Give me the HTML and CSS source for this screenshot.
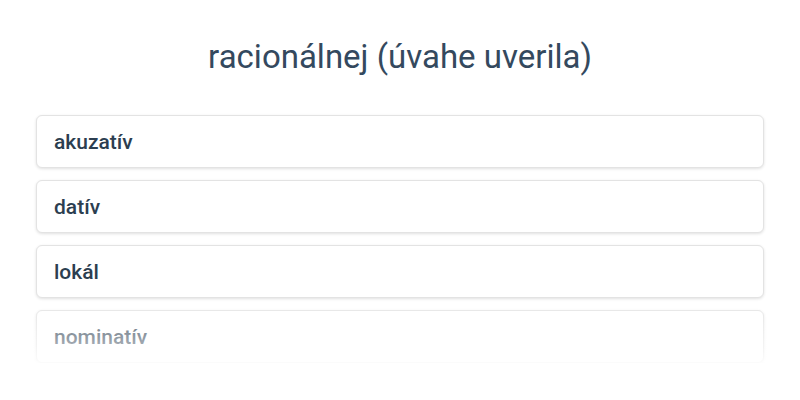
FILE: index.html
```html
<!DOCTYPE html>
<html lang="sk">
<head>
<meta charset="utf-8">
<link rel="stylesheet" href="styles.css">
</head>
<body>
<main class="quiz">
  <h1 class="question">racionálnej (úvahe uverila)</h1>
  <div class="options">
    <button class="option">akuzatív</button>
    <button class="option">datív</button>
    <button class="option">lokál</button>
    <button class="option">nominatív</button>
  </div>
</main>
</body>
</html>
```
FILE: styles.css
```css
html, body {
  margin: 0;
  background: #ffffff;
}
body {
  font-family: Roboto, "Noto Sans", sans-serif;
  color: #2c3e50;
}
.quiz {
  padding: 35px 36px 0;
}
.question {
  margin: 0 0 36px;
  text-align: center;
  font-weight: 400;
  font-size: 33px;
  line-height: 44px;
  color: #34495e;
}
.options {
  position: relative;
  display: flex;
  flex-direction: column;
  gap: 12px;
}
.options::after {
  content: "";
  position: absolute;
  left: -10px;
  right: -10px;
  bottom: -4px;
  height: 64px;
  background: linear-gradient(to bottom, rgba(255,255,255,0.1), rgba(255,255,255,0.6) 70%, rgba(255,255,255,0.95));
  pointer-events: none;
}
.option {
  display: block;
  width: 100%;
  height: 53px;
  padding: 0 17px;
  text-align: left;
  font-family: inherit;
  font-size: 21px;
  font-weight: 500;
  color: #2c3e50;
  background: #fff;
  border: 1px solid #e3e3e3;
  border-radius: 6px;
  box-shadow: 0 1px 3px rgba(0,0,0,0.12);
}
```
